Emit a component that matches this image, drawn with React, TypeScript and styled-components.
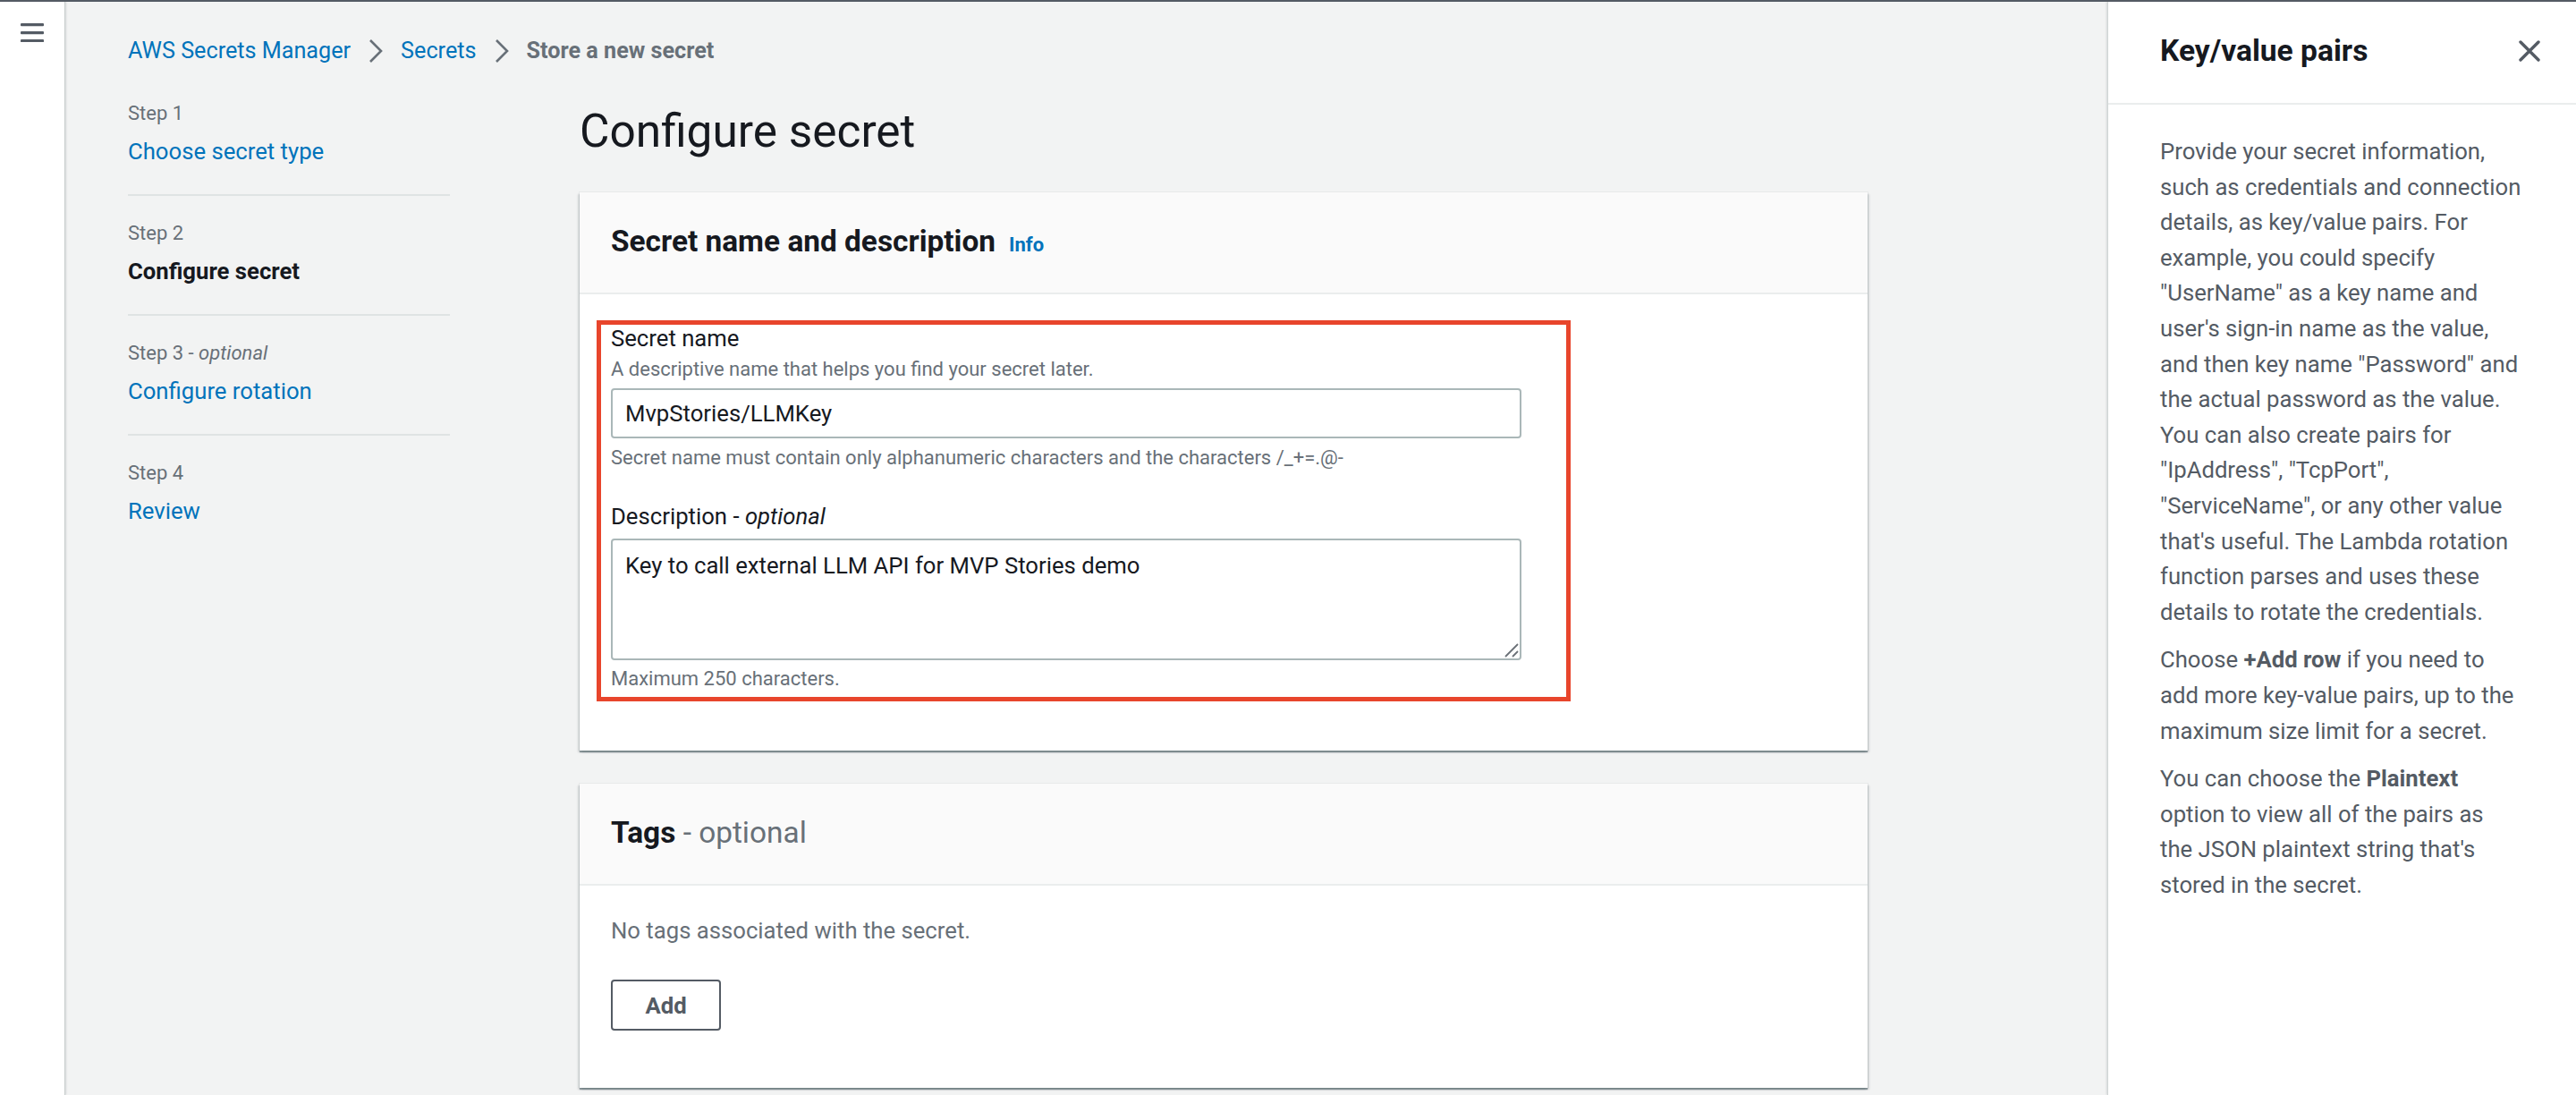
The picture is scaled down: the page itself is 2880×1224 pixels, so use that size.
import React from "react";
import styled, { createGlobalStyle } from "styled-components";

const GlobalStyle = createGlobalStyle`
  html, body { margin: 0; padding: 0; }
  body {
    font-family: Roboto, "Liberation Sans", Arial, sans-serif;
    color: #16191f;
    background: #f2f3f3;
  }
  * { box-sizing: border-box; }
`;

const Page = styled.div`
  display: flex;
  width: 2880px;
  height: 1224px;
  border-top: 2px solid #545b64;
  overflow: hidden;
`;

const NavStrip = styled.aside`
  flex: 0 0 72px;
  background: #ffffff;
  box-shadow: 1px 0 0 #c8cdcd, 2px 0 2px rgba(0, 28, 36, 0.12);
  padding: 24px 0 0 23px;
  z-index: 1;
`;

const Main = styled.main`
  flex: 1;
  display: flex;
  flex-direction: column;
  padding: 37px 0 0 71px;
  background: #f2f3f3;
  min-width: 0;
`;

const Breadcrumbs = styled.nav`
  display: flex;
  align-items: center;
  gap: 20px;
  height: 36px;
  font-size: 25.2px;
  line-height: 36px;
`;

const Crumb = styled.span<{ $current?: boolean }>`
  color: ${(p) => (p.$current ? "#687078" : "#0073bb")};
  font-weight: ${(p) => (p.$current ? 700 : 400)};
`;

const ContentRow = styled.div`
  display: flex;
  margin-top: 10px;
`;

const StepsNav = styled.ol`
  flex: 0 0 360px;
  list-style: none;
  margin: 0;
  padding: 0;
`;

const StepItem = styled.li`
  padding: 27px 0 30px;
  border-bottom: 2px solid #dfe3e3;
  &:last-child {
    border-bottom: none;
  }
`;

const StepLabel = styled.div`
  font-size: 22px;
  line-height: 30px;
  color: #687078;
  margin-bottom: 9px;
`;

const StepLink = styled.div<{ $active?: boolean }>`
  font-size: 25.7px;
  line-height: 36px;
  color: ${(p) => (p.$active ? "#16191f" : "#0073bb")};
  font-weight: ${(p) => (p.$active ? 700 : 400)};
`;

const FormColumn = styled.section`
  flex: 0 0 1440px;
  margin-left: 145px;
  padding-top: 30px;
`;

const PageTitle = styled.h1`
  font-size: 51.4px;
  line-height: 64px;
  font-weight: 400;
  margin: 0 0 36px;
  color: #16191f;
`;

const Card = styled.div`
  background: #ffffff;
  box-shadow: 0 2px 1px 0 rgba(0, 28, 36, 0.35), 2px 2px 2px 0 rgba(0, 28, 36, 0.12),
    -2px 2px 2px 0 rgba(0, 28, 36, 0.12), 0 0 0 1px rgba(0, 28, 36, 0.04);
  margin-bottom: 37px;
`;

const CardHeader = styled.div`
  display: flex;
  align-items: baseline;
  background: #fafafa;
  padding: 35px 35px 37px;
  border-bottom: 2px solid #eaeded;
`;

const CardTitle = styled.h2`
  margin: 0;
  font-size: 33.4px;
  line-height: 40px;
  font-weight: 700;
  color: #16191f;
`;

const TitleSuffix = styled.span`
  font-weight: 400;
  color: #687078;
`;

const InfoLink = styled.span`
  margin-left: 15px;
  font-size: 22px;
  font-weight: 700;
  color: #0073bb;
`;

const CardBody = styled.div<{ $pad: string }>`
  padding: ${(p) => p.$pad};
`;

const Highlight = styled.div`
  width: 1089px;
  margin-left: -16px;
  border: 5px solid #e8452c;
  padding: 0 50px 6px 11px;
`;

const FieldLabel = styled.div<{ $gap?: number }>`
  font-size: 25.7px;
  line-height: 30px;
  color: #16191f;
  margin-top: ${(p) => p.$gap ?? 0}px;
`;

const FieldHint = styled.div<{ $gap: number }>`
  font-size: 22px;
  line-height: 28px;
  color: #687078;
  margin-top: ${(p) => p.$gap}px;
`;

const TextInput = styled.input`
  display: block;
  width: 1018px;
  height: 56px;
  margin-top: 7px;
  border: 2px solid #aab7b8;
  border-radius: 4px;
  padding: 0 14px;
  font-family: inherit;
  font-size: 25.7px;
  color: #16191f;
  background: #ffffff;
  outline: none;
`;

const TextAreaWrap = styled.div`
  position: relative;
  width: 1018px;
  height: 136px;
  margin-top: 10px;
`;

const TextArea = styled.textarea`
  display: block;
  width: 100%;
  height: 100%;
  border: 2px solid #aab7b8;
  border-radius: 4px;
  padding: 13px 14px;
  font-family: inherit;
  font-size: 25.7px;
  line-height: 30px;
  color: #16191f;
  resize: none;
  outline: none;
  background: #ffffff;
`;

const ResizeHandle = styled.svg`
  position: absolute;
  right: 2px;
  bottom: 2px;
`;

const NoTags = styled.div`
  font-size: 25.7px;
  line-height: 36px;
  color: #687078;
`;

const AddButton = styled.button`
  display: block;
  margin-top: 37px;
  width: 123px;
  height: 57px;
  border: 2px solid #545b64;
  border-radius: 4px;
  background: #ffffff;
  color: #545b64;
  font-family: inherit;
  font-size: 25.7px;
  font-weight: 700;
  padding: 0;
`;

const HelpPanel = styled.aside`
  flex: 0 0 523px;
  background: #ffffff;
  box-shadow: -1px 0 0 #d0d5d5, -2px 0 2px rgba(0, 28, 36, 0.12);
  z-index: 1;
`;

const HelpHeader = styled.div`
  display: flex;
  align-items: center;
  justify-content: space-between;
  padding: 35px 40px 38px 58px;
  border-bottom: 2px solid #eaeded;
`;

const HelpTitle = styled.h2`
  margin: 0;
  font-size: 33.6px;
  line-height: 40px;
  font-weight: 700;
  color: #16191f;
`;

const HelpBody = styled.div`
  padding: 33px 40px 0 58px;
  font-size: 25.7px;
  line-height: 39.6px;
  color: #545b64;
`;

const HelpPara = styled.p`
  margin: 0 0 14px;
`;

const HelpLine = styled.span`
  display: block;
  white-space: nowrap;
`;

const Hamburger = () => (
  <svg width="26" height="21" viewBox="0 0 26 21">
    <rect x="0" y="0" width="26" height="3.2" rx="1" fill="#545b64" />
    <rect x="0" y="9" width="26" height="3.2" rx="1" fill="#545b64" />
    <rect x="0" y="18" width="26" height="3.2" rx="1" fill="#545b64" />
  </svg>
);

const Chevron = () => (
  <svg width="16" height="28" viewBox="0 0 16 28">
    <path d="M2 2 L14 14 L2 26" fill="none" stroke="#687078" strokeWidth="2.6" />
  </svg>
);

const CloseIcon = () => (
  <svg width="24" height="24" viewBox="0 0 24 24">
    <path d="M2 2 L22 22 M22 2 L2 22" stroke="#545b64" strokeWidth="3.4" strokeLinecap="round" />
  </svg>
);

const steps = [
  { label: "Step 1", optional: false, name: "Choose secret type", active: false },
  { label: "Step 2", optional: false, name: "Configure secret", active: true },
  { label: "Step 3", optional: true, name: "Configure rotation", active: false },
  { label: "Step 4", optional: false, name: "Review", active: false },
];

const helpParagraphs: React.ReactNode[][] = [
  [
    "Provide your secret information,",
    "such as credentials and connection",
    "details, as key/value pairs. For",
    "example, you could specify",
    "\"UserName\" as a key name and",
    "user's sign-in name as the value,",
    "and then key name \"Password\" and",
    "the actual password as the value.",
    "You can also create pairs for",
    "\"IpAddress\", \"TcpPort\",",
    "\"ServiceName\", or any other value",
    "that's useful. The Lambda rotation",
    "function parses and uses these",
    "details to rotate the credentials.",
  ],
  [
    <>
      Choose <b>+Add row</b> if you need to
    </>,
    "add more key-value pairs, up to the",
    "maximum size limit for a secret.",
  ],
  [
    <>
      You can choose the <b>Plaintext</b>
    </>,
    "option to view all of the pairs as",
    "the JSON plaintext string that's",
    "stored in the secret.",
  ],
];

export default function App() {
  return (
    <>
      <GlobalStyle />
      <Page>
        <NavStrip>
          <Hamburger />
        </NavStrip>
        <Main>
          <Breadcrumbs>
            <Crumb>AWS Secrets Manager</Crumb>
            <Chevron />
            <Crumb>Secrets</Crumb>
            <Chevron />
            <Crumb $current>Store a new secret</Crumb>
          </Breadcrumbs>
          <ContentRow>
            <StepsNav>
              {steps.map((s) => (
                <StepItem key={s.label}>
                  <StepLabel>
                    {s.label}
                    {s.optional && (
                      <>
                        {" - "}
                        <i>optional</i>
                      </>
                    )}
                  </StepLabel>
                  <StepLink $active={s.active}>{s.name}</StepLink>
                </StepItem>
              ))}
            </StepsNav>
            <FormColumn>
              <PageTitle>Configure secret</PageTitle>
              <Card>
                <CardHeader>
                  <CardTitle>Secret name and description</CardTitle>
                  <InfoLink>Info</InfoLink>
                </CardHeader>
                <CardBody $pad="29px 35px 55px">
                  <Highlight>
                    <FieldLabel>Secret name</FieldLabel>
                    <FieldHint $gap={6}>A descriptive name that helps you find your secret later.</FieldHint>
                    <TextInput readOnly defaultValue="MvpStories/LLMKey" />
                    <FieldHint $gap={8}>
                      Secret name must contain only alphanumeric characters and the characters /_+=.@-
                    </FieldHint>
                    <FieldLabel $gap={36}>
                      Description - <i>optional</i>
                    </FieldLabel>
                    <TextAreaWrap>
                      <TextArea readOnly defaultValue="Key to call external LLM API for MVP Stories demo" />
                      <ResizeHandle width="18" height="18" viewBox="0 0 18 18">
                        <path d="M2 16 L16 2 M10 16 L16 10" stroke="#6b7178" strokeWidth="1.8" />
                      </ResizeHandle>
                    </TextAreaWrap>
                    <FieldHint $gap={7}>Maximum 250 characters.</FieldHint>
                  </Highlight>
                </CardBody>
              </Card>
              <Card>
                <CardHeader>
                  <CardTitle>
                    Tags <TitleSuffix>- optional</TitleSuffix>
                  </CardTitle>
                </CardHeader>
                <CardBody $pad="32px 35px 64px">
                  <NoTags>No tags associated with the secret.</NoTags>
                  <AddButton>Add</AddButton>
                </CardBody>
              </Card>
            </FormColumn>
          </ContentRow>
        </Main>
        <HelpPanel>
          <HelpHeader>
            <HelpTitle>Key/value pairs</HelpTitle>
            <CloseIcon />
          </HelpHeader>
          <HelpBody>
            {helpParagraphs.map((lines, i) => (
              <HelpPara key={i}>
                {lines.map((line, j) => (
                  <HelpLine key={j}>{line}</HelpLine>
                ))}
              </HelpPara>
            ))}
          </HelpBody>
        </HelpPanel>
      </Page>
    </>
  );
}
